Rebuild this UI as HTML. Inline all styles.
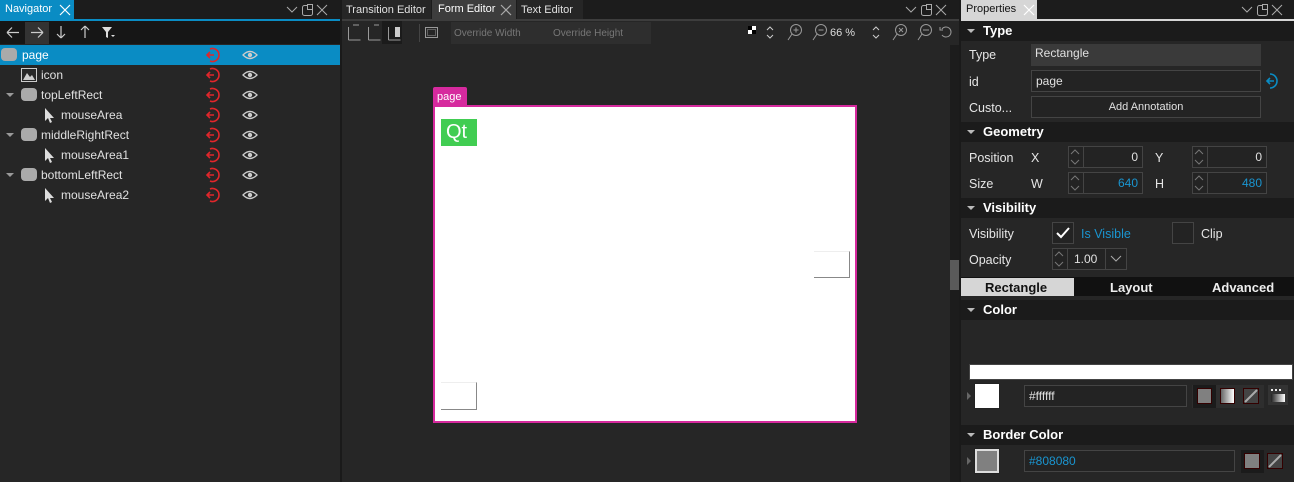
<!DOCTYPE html>
<html><head><meta charset="utf-8"><style>
*{box-sizing:border-box;margin:0;padding:0}
body{width:1294px;height:482px;background:#262626;font-family:"Liberation Sans",sans-serif;font-size:12px;color:#e0e0e0;position:relative;overflow:hidden}
.a{position:absolute}
.t{white-space:nowrap}
.tab{font-size:11px}
.row{position:absolute;left:0;width:340px;height:20px}
.row span{position:absolute;top:3px}
.hdr{position:absolute;left:961px;width:333px;height:20px;background:#1b1b1b;font-weight:bold;font-size:13px;color:#fff}
.hdr b{position:absolute;left:22px;top:2px}
.hdr i{position:absolute;left:6px;top:8px;border-left:4px solid transparent;border-right:4px solid transparent;border-top:4px solid #bbb}
.lbl{position:absolute;color:#e6e6e6;font-size:12.5px}
.box{position:absolute;border:1px solid #444;background:#232323}
.spin{position:absolute;border:1px solid #444;background:#232323;height:22px}
.spin:before{content:"";position:absolute;left:0;top:0;width:14px;height:20px;border-right:1px solid #444}
.spin:after{content:"";position:absolute;left:3px;top:4px;width:8px;height:12px;background:linear-gradient(#555,#555) 0 0/0 0 no-repeat}
.spin span{position:absolute;right:4px;top:3px}
</style></head><body>
<svg width="0" height="0" style="position:absolute"><defs>
<g id="ttl" fill="none" stroke="#aaa" stroke-width="1"><path d="M1 4l5 5 5-5"/><rect x="16.5" y="2.5" width="10" height="10" rx="2"/><rect x="21.5" y="1.5" width="5" height="5" fill="#1c1c1c"/><path d="M31 2l10 10M41 2l-10 10"/></g>
<g id="sp" fill="none" stroke="#777"><path d="M3 8l4-4 4 4M3 14l4 4 4-4"/></g>
</defs></svg>
<!-- NAVIGATOR -->
<div class="a" style="left:0;top:0;width:340px;height:19px;background:#1c1c1c"></div>
<div class="a t tab" style="left:0;top:0;width:74px;height:19px;background:#0a8cc4;color:#fff;padding:3px 0 0 5px">Navigator</div>
<svg class="a" style="left:59px;top:4px" width="12" height="12"><path d="M1 1l10 10M11 1L1 11" stroke="#fff" stroke-width="1.2"/></svg>
<svg class="a" style="left:286px;top:3px" width="44" height="14"><use href="#ttl"/></svg>
<div class="a" style="left:0;top:19px;width:340px;height:2px;background:#0a8cc4"></div>
<div class="a" style="left:0;top:21px;width:340px;height:23px;background:#161616"></div>
<div class="a" style="left:25px;top:22px;width:24px;height:22px;background:#333"></div>
<svg class="a" style="left:0;top:21px" width="120" height="23" fill="none" stroke="#ccc" stroke-width="1.2">
<path d="M7 11.5h12M7 11.5l5-5M7 11.5l5 5"/><path d="M31 11.5h12M43 11.5l-5-5M43 11.5l-5 5"/>
<path d="M61 5v12M61 17l-4-4M61 17l4-4"/><path d="M85 5v12M85 5l-4 4M85 5l4 4"/>
<path d="M102 6h10l-4 5v6l-2-1v-5z" fill="#ddd" stroke="none"/><path d="M111 14h4l-2 2z" fill="#ddd" stroke="none"/>
</svg>
<div class="row" style="top:45px;background:#0a8cc4"></div>
<svg class="a" style="left:0;top:45px" width="340" height="160">
<g fill="#aaa"><rect x="1" y="3" width="16" height="13" rx="4"/><rect x="21" y="83" width="16" height="13" rx="4"/><rect x="21" y="43" width="16" height="13" rx="4"/><rect x="21" y="123" width="16" height="13" rx="4"/></g>
<g fill="#999"><path d="M6 48h8l-4 4zM6 88h8l-4 4zM6 128h8l-4 4z"/></g>
<rect x="21.5" y="23.5" width="15" height="13" fill="none" stroke="#ccc"/><path d="M23 35l4-7 3 4 2-2 3 5z" fill="#ccc"/>
<g fill="#ddd"><path d="M45 63v13l3-3 2 5 2-1-2-4h4zM45 103v13l3-3 2 5 2-1-2-4h4zM45 143v13l3-3 2 5 2-1-2-4h4z"/></g>
<g fill="none" stroke="#e0262b" stroke-width="1.6"><g id="r"><path d="M210 4a6.5 6.5 0 1 1 0 12"/><path d="M208 10h6M210 7l-3 3 3 3"/></g>
<use href="#r" y="20"/><use href="#r" y="40"/><use href="#r" y="60"/><use href="#r" y="80"/><use href="#r" y="100"/><use href="#r" y="120"/><use href="#r" y="140"/></g>
<g id="e"><path d="M243 10q7-7 14 0q-7 7-14 0z" fill="none" stroke="#ccc" stroke-width="1.3"/><circle cx="250" cy="10" r="2.2" fill="#ccc"/></g>
<use href="#e" y="20"/><use href="#e" y="40"/><use href="#e" y="60"/><use href="#e" y="80"/><use href="#e" y="100"/><use href="#e" y="120"/><use href="#e" y="140"/>
</svg>
<div class="row" style="top:45px"><span style="left:22px;color:#fff">page</span></div>
<div class="row" style="top:65px"><span style="left:41px">icon</span></div>
<div class="row" style="top:85px"><span style="left:41px">topLeftRect</span></div>
<div class="row" style="top:105px"><span style="left:61px">mouseArea</span></div>
<div class="row" style="top:125px"><span style="left:41px">middleRightRect</span></div>
<div class="row" style="top:145px"><span style="left:61px">mouseArea1</span></div>
<div class="row" style="top:165px"><span style="left:41px">bottomLeftRect</span></div>
<div class="row" style="top:185px"><span style="left:61px">mouseArea2</span></div>
<div class="a" style="left:340px;top:0;width:2px;height:482px;background:#1a1a1a"></div>
<!-- CENTER -->
<div class="a" style="left:342px;top:0;width:618px;height:19px;background:#1c1c1c"></div>
<div class="a t tab" style="left:342px;top:0;width:89px;height:19px;background:#262626;padding:4px 0 0 4px">Transition Editor</div>
<div class="a t tab" style="left:432px;top:0;width:84px;height:21px;background:#3d3d3d;color:#fff;padding:3px 0 0 6px">Form Editor</div>
<svg class="a" style="left:500px;top:4px" width="12" height="12"><path d="M1 1l10 10M11 1L1 11" stroke="#aaa" stroke-width="1.2"/></svg>
<div class="a t tab" style="left:517px;top:0;width:66px;height:19px;background:#262626;padding:4px 0 0 4px">Text Editor</div>
<svg class="a" style="left:905px;top:3px" width="44" height="14"><use href="#ttl"/></svg>
<div class="a" style="left:342px;top:19px;width:618px;height:2px;background:#3d3d3d"></div>
<div class="a" style="left:342px;top:21px;width:618px;height:24px;background:#262626"></div>
<div class="a" style="left:382px;top:21px;width:20px;height:23px;background:#1b1b1b"></div>
<svg class="a" style="left:342px;top:21px" width="618" height="24" fill="none" stroke="#999">
<path d="M6.5 19V6M6.5 19h12M11 4h6M26.5 19V6M26.5 19h12M32 4h5M46.5 19V6M46.5 19h12"/><rect x="53" y="6" width="5" height="10" fill="#ccc" stroke="none"/>
<rect x="83.5" y="6.5" width="12" height="10"/><rect x="85.5" y="8.5" width="8" height="6" stroke-dasharray="1 1"/><path d="M77.5 3v18M109.5 3v18" stroke="#444"/>
<rect x="406" y="5" width="8" height="8" fill="#fff" stroke="none"/><rect x="410" y="9" width="4" height="4" fill="#000" stroke="none"/><rect x="406" y="5" width="4" height="4" fill="#000" stroke="none"/>
<path d="M425 9l3-3 3 3M425 14l3 3 3-3" stroke="#ccc"/>
<circle cx="454" cy="9" r="5.5"/><path d="M450 13l-4 6M451.5 9h5M454 6.5v5"/>
<circle cx="479" cy="9" r="5.5"/><path d="M475 13l-4 6M476.5 9h5"/>
<path d="M531 9l3-3 3 3M531 14l3 3 3-3" stroke="#ccc"/>
<circle cx="559" cy="9" r="5.5"/><path d="M555 13l-4 6M557 7l4 4M561 7l-4 4"/>
<circle cx="584" cy="9" r="5.5"/><path d="M580 13l-4 6M581 9h6"/>
<path d="M600 8a5 5 0 1 1 0 6M598 6v3h3"/>
</svg>
<div class="a" style="left:451px;top:22px;width:200px;height:22px;background:#2e2e2e;color:#777;font-size:10px"><span class="a t" style="left:3px;top:6px">Override Width</span><span class="a t" style="left:102px;top:6px">Override Height</span></div>
<div class="a t" style="left:830px;top:27px;color:#ddd;font-size:11px">66 %</div>
<div class="a" style="left:950px;top:45px;width:10px;height:437px;background:#1c1c1c"></div>
<div class="a" style="left:950px;top:260px;width:10px;height:30px;background:#5a5a5a"></div>
<div class="a tab" style="left:433px;top:87px;width:34px;height:19px;background:#d62a9e;color:#fff;padding:4px 0 0 4px;border-radius:2px 2px 0 0">page</div>
<div class="a" style="left:433px;top:105px;width:424px;height:318px;background:#fff;border:2px solid #d62a9e"></div>
<div class="a" style="left:441px;top:119px;width:36px;height:27px;background:#41cd52;color:#fff;font-size:20px;padding:0 0 0 5px;line-height:27px">Qt</div>
<div class="a" style="left:814px;top:251px;width:36px;height:27px;border-right:1px solid #888;border-bottom:1px solid #888;border-top:1px solid #eee"></div>
<div class="a" style="left:441px;top:382px;width:36px;height:28px;border-right:1px solid #888;border-bottom:1px solid #888;border-top:1px solid #eee"></div>
<div class="a" style="left:959px;top:0;width:2px;height:482px;background:#1a1a1a"></div>
<!-- PROPERTIES -->
<div class="a" style="left:961px;top:0;width:333px;height:19px;background:#1c1c1c"></div>
<div class="a t tab" style="left:961px;top:0;width:76px;height:21px;background:#d6d6d6;color:#111;padding:3px 0 0 5px">Properties</div>
<svg class="a" style="left:1023px;top:4px" width="12" height="12"><path d="M1 1l10 10M11 1L1 11" stroke="#fff" stroke-width="1.2"/></svg>
<svg class="a" style="left:1241px;top:3px" width="44" height="14"><use href="#ttl"/></svg>
<div class="a" style="left:961px;top:19px;width:333px;height:2px;background:#d6d6d6"></div>
<div class="hdr" style="top:21px"><i></i><b>Type</b></div>
<div class="lbl" style="left:969px;top:48px">Type</div>
<div class="a" style="left:1031px;top:44px;width:230px;height:22px;background:#3a3a3a;padding:2px 0 0 4px">Rectangle</div>
<div class="lbl" style="left:969px;top:75px">id</div>
<div class="box" style="left:1031px;top:70px;width:230px;height:22px;padding:3px 0 0 4px">page</div>
<svg class="a" style="left:1264px;top:71px" width="20" height="20" fill="none" stroke="#0a8cc4" stroke-width="1.6"><path d="M6 3a7 7 0 1 1 0 14"/><path d="M3 10h7M6 7l-3 3 3 3"/></svg>
<div class="lbl" style="left:969px;top:101px">Custo...</div>
<div class="box" style="left:1031px;top:96px;width:230px;height:22px;text-align:center;padding-top:4px;font-size:11px">Add Annotation</div>
<div class="hdr" style="top:122px"><i></i><b>Geometry</b></div>
<div class="lbl" style="left:969px;top:151px">Position</div><div class="lbl" style="left:1031px;top:151px">X</div><div class="lbl" style="left:1155px;top:151px">Y</div>
<div class="spin" style="left:1068px;top:146px;width:75px"><span>0</span></div>
<div class="spin" style="left:1192px;top:146px;width:75px"><span>0</span></div>
<div class="lbl" style="left:969px;top:177px">Size</div><div class="lbl" style="left:1031px;top:177px">W</div><div class="lbl" style="left:1155px;top:177px">H</div>
<div class="spin" style="left:1068px;top:172px;width:75px;color:#1a95d0"><span>640</span></div>
<div class="spin" style="left:1192px;top:172px;width:75px;color:#1a95d0"><span>480</span></div>
<svg class="a" style="left:1068px;top:146px" width="200" height="50"><use href="#sp"/><use href="#sp" x="124"/><use href="#sp" y="26"/><use href="#sp" x="124" y="26"/></svg>
<div class="hdr" style="top:198px"><i></i><b>Visibility</b></div>
<div class="lbl" style="left:969px;top:227px">Visibility</div>
<div class="box" style="left:1052px;top:222px;width:22px;height:22px"></div>
<svg class="a" style="left:1052px;top:222px" width="22" height="22"><path d="M5 11l4 4 8-9" fill="none" stroke="#fff" stroke-width="2"/></svg>
<div class="lbl" style="left:1081px;top:227px;color:#1a95d0">Is Visible</div>
<div class="box" style="left:1172px;top:222px;width:22px;height:22px"></div>
<div class="lbl" style="left:1201px;top:227px">Clip</div>
<div class="lbl" style="left:969px;top:253px">Opacity</div>
<div class="spin" style="left:1052px;top:248px;width:75px"><span style="left:21px;right:auto">1.00</span></div>
<svg class="a" style="left:1052px;top:248px" width="75" height="22"><use href="#sp"/><path d="M53.5 1v20" stroke="#444"/><path d="M59 8l5 5 5-5" fill="none" stroke="#aaa"/></svg>
<div class="a" style="left:961px;top:277px;width:333px;height:19px;background:#111"></div>
<div class="a" style="left:961px;top:278px;width:113px;height:18px;background:#d6d6d6"></div>
<div class="a t" style="left:985px;top:280px;color:#111;font-weight:bold;font-size:13px">Rectangle</div>
<div class="a t" style="left:1110px;top:280px;color:#eee;font-weight:bold;font-size:13px">Layout</div>
<div class="a t" style="left:1212px;top:280px;color:#eee;font-weight:bold;font-size:13px">Advanced</div>
<div class="hdr" style="top:300px"><i></i><b>Color</b></div>
<div class="a" style="left:969px;top:364px;width:324px;height:16px;background:#fff;border:1px solid #444"></div>
<div class="a" style="left:967px;top:392px;border-top:4px solid transparent;border-bottom:4px solid transparent;border-left:4px solid #666"></div>
<div class="a" style="left:975px;top:384px;width:24px;height:24px;background:#fff;border:2px solid #fff;outline:1px solid #222"></div>
<div class="box" style="left:1024px;top:385px;width:163px;height:22px;padding:3px 0 0 4px">#ffffff</div>
<div class="a" style="left:1192px;top:385px;width:72px;height:23px;background:#2e2e2e"></div>
<div class="a" style="left:1193px;top:385px;width:23px;height:23px;background:#1b1b1b"></div>
<div class="a" style="left:1197px;top:388px;width:15px;height:16px;background:#808080;border:1px solid #300"></div>
<div class="a" style="left:1220px;top:388px;width:15px;height:16px;background:linear-gradient(90deg,#666,#fff);border:1px solid #300"></div>
<svg class="a" style="left:1243px;top:388px" width="17" height="17"><rect x=".5" y=".5" width="15" height="15" fill="#444" stroke="#300"/><path d="M2 14L14 2" stroke="#aaa" stroke-width="2"/></svg>
<div class="a" style="left:1268px;top:385px;width:20px;height:20px;background:#333"></div>
<div class="a" style="left:1271px;top:394px;width:14px;height:8px;background:linear-gradient(90deg,#222,#fff)"></div>
<div class="a" style="left:1271px;top:389px;width:10px;height:2px;background:repeating-linear-gradient(90deg,#eee 0 2px,transparent 2px 4px)"></div>
<div class="hdr" style="top:425px"><i></i><b>Border Color</b></div>
<div class="a" style="left:967px;top:457px;border-top:4px solid transparent;border-bottom:4px solid transparent;border-left:4px solid #666"></div>
<div class="a" style="left:975px;top:449px;width:24px;height:24px;background:#808080;border:2px solid #ddd;outline:1px solid #222"></div>
<div class="box" style="left:1024px;top:450px;width:211px;height:22px;padding:3px 0 0 4px;color:#1a95d0">#808080</div>
<div class="a" style="left:1241px;top:450px;width:23px;height:23px;background:#1b1b1b"></div>
<div class="a" style="left:1244px;top:453px;width:16px;height:16px;background:#808080;border:1px solid #300"></div>
<svg class="a" style="left:1267px;top:453px" width="17" height="17"><rect x=".5" y=".5" width="15" height="15" fill="#444" stroke="#300"/><path d="M2 14L14 2" stroke="#aaa" stroke-width="2"/></svg>
</body></html>
